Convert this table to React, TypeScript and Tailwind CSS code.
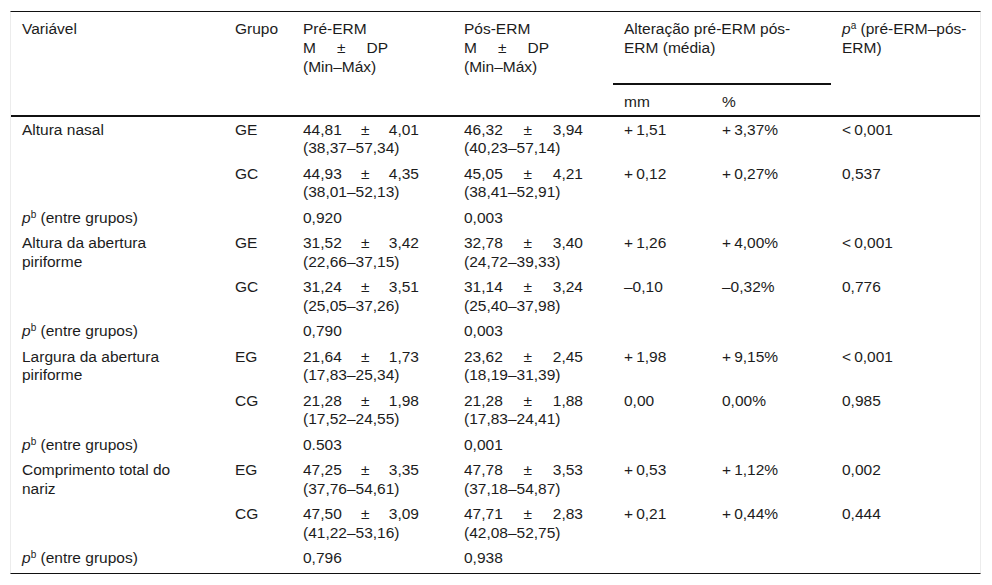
import React from "react";

/**
 * Tabela: medidas nasais pré e pós-ERM
 */

type Row = {
  g: string;
  pre: [string, string, string];
  pos: [string, string, string];
  mm: string;
  pct: string;
  p: string;
};

type Group = { name: string; rows: Row[]; pb: [string, string] };

const T = "\u2009";

const groups: Group[] = [
  {
    name: "Altura nasal",
    rows: [
      { g: "GE", pre: ["44,81", "4,01", "(38,37–57,34)"], pos: ["46,32", "3,94", "(40,23–57,14)"], mm: `+${T}1,51`, pct: `+${T}3,37%`, p: `<${T}0,001` },
      { g: "GC", pre: ["44,93", "4,35", "(38,01–52,13)"], pos: ["45,05", "4,21", "(38,41–52,91)"], mm: `+${T}0,12`, pct: `+${T}0,27%`, p: "0,537" },
    ],
    pb: ["0,920", "0,003"],
  },
  {
    name: "Altura da abertura piriforme",
    rows: [
      { g: "GE", pre: ["31,52", "3,42", "(22,66–37,15)"], pos: ["32,78", "3,40", "(24,72–39,33)"], mm: `+${T}1,26`, pct: `+${T}4,00%`, p: `<${T}0,001` },
      { g: "GC", pre: ["31,24", "3,51", "(25,05–37,26)"], pos: ["31,14", "3,24", "(25,40–37,98)"], mm: "–0,10", pct: "–0,32%", p: "0,776" },
    ],
    pb: ["0,790", "0,003"],
  },
  {
    name: "Largura da abertura piriforme",
    rows: [
      { g: "EG", pre: ["21,64", "1,73", "(17,83–25,34)"], pos: ["23,62", "2,45", "(18,19–31,39)"], mm: `+${T}1,98`, pct: `+${T}9,15%`, p: `<${T}0,001` },
      { g: "CG", pre: ["21,28", "1,98", "(17,52–24,55)"], pos: ["21,28", "1,88", "(17,83–24,41)"], mm: "0,00", pct: "0,00%", p: "0,985" },
    ],
    pb: ["0.503", "0,001"],
  },
  {
    name: "Comprimento total do nariz",
    rows: [
      { g: "EG", pre: ["47,25", "3,35", "(37,76–54,61)"], pos: ["47,78", "3,53", "(37,18–54,87)"], mm: `+${T}0,53`, pct: `+${T}1,12%`, p: "0,002" },
      { g: "CG", pre: ["47,50", "3,09", "(41,22–53,16)"], pos: ["47,71", "2,83", "(42,08–52,75)"], mm: `+${T}0,21`, pct: `+${T}0,44%`, p: "0,444" },
    ],
    pb: ["0,796", "0,938"],
  },
];

const cols = "grid grid-cols-[213px_68px_161px_160px_98px_120px_151px]";
const cell = "pl-[11px] pt-[3.5px] pb-[3.5px]";

function MeanSd({ v, width }: { v: [string, string, string]; width: string }) {
  return (
    <div className={width}>
      <div className="flex justify-between">
        <span>{v[0]}</span>
        <span>±</span>
        <span>{v[1]}</span>
      </div>
      <div>{v[2]}</div>
    </div>
  );
}

function HeadStat({ title }: { title: string }) {
  return (
    <div>
      <div>{title}</div>
      <div className="flex w-[85px] justify-between">
        <span>M</span>
        <span>±</span>
        <span>DP</span>
      </div>
      <div>(Min–Máx)</div>
    </div>
  );
}

export default function App() {
  return (
    <div className="min-h-[585px] bg-white pt-[11px] pl-[10px] font-['Liberation_Sans',Arial,Helvetica,sans-serif] text-[15.5px] text-[#1c1c1c]">
      <div className="w-[971px] border-x border-x-[#ececec] border-t border-t-[#111] border-b border-b-[#111]">
        {/* Header */}
        <div className={`${cols} grid-rows-[71px_2px_30px] leading-[19px] border-b-2 border-[#111]`}>
          <div className="row-span-3 pl-[11px] pt-[7px]">Variável</div>
          <div className="row-span-3 pl-[11px] pt-[7px]">Grupo</div>
          <div className="row-span-3 pl-[11px] pt-[7px]">
            <HeadStat title="Pré-ERM" />
          </div>
          <div className="row-span-3 pl-[11px] pt-[7px]">
            <HeadStat title="Pós-ERM" />
          </div>
          <div className="col-span-2 pl-[11px] pt-[7px]">
            Alteração pré-ERM pós-
            <br />
            ERM (média)
          </div>
          <div className="row-span-3 pl-[11px] pt-[7px]">
            <i>p</i>
            <sup className="text-[10px]">a</sup> (pré-ERM–pós-
            <br />
            ERM)
          </div>
          <div className="col-span-2 bg-[#111]" />
          <div className="pl-[11px] pt-[7px]">mm</div>
          <div className="pl-[11px] pt-[7px]">%</div>
        </div>

        {/* Body */}
        <div className={`${cols} leading-[18.5px] pb-[2px]`}>
          {groups.map((grp) => (
            <React.Fragment key={grp.name}>
              {grp.rows.map((r, i) => (
                <React.Fragment key={r.g}>
                  <div className={`${cell} pr-[40px]`}>{i === 0 ? grp.name : ""}</div>
                  <div className={cell}>{r.g}</div>
                  <div className={cell}>
                    <MeanSd v={r.pre} width="w-[116px]" />
                  </div>
                  <div className={cell}>
                    <MeanSd v={r.pos} width="w-[119px]" />
                  </div>
                  <div className={cell}>{r.mm}</div>
                  <div className={cell}>{r.pct}</div>
                  <div className={cell}>{r.p}</div>
                </React.Fragment>
              ))}
              <div className={`${cell} col-span-2`}>
                <i>p</i>
                <sup className="text-[10px]">b</sup> (entre grupos)
              </div>
              <div className={cell}>{grp.pb[0]}</div>
              <div className={cell}>{grp.pb[1]}</div>
              <div className="col-span-3" />
            </React.Fragment>
          ))}
        </div>
      </div>
    </div>
  );
}
